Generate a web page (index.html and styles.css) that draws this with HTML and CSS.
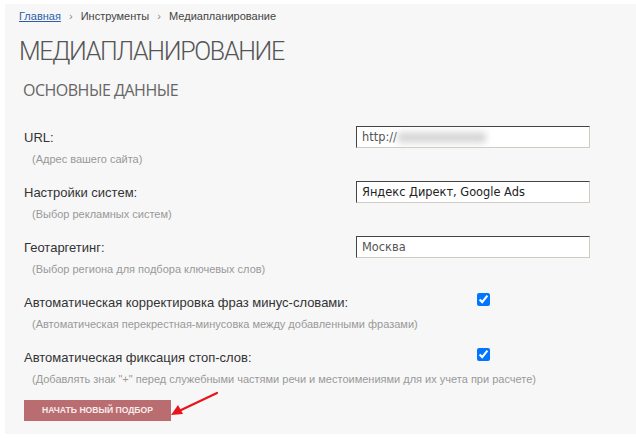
FILE: index.html
```html
<!DOCTYPE html>
<html lang="ru">
<head>
  <meta charset="utf-8">
  <title>Медиапланирование</title>
  <link rel="stylesheet" href="styles.css">
</head>
<body>
  <div class="page">
    <div class="crumbs">
      <a href="#">Главная</a>
      <span class="sep">›</span>
      <span>Инструменты</span>
      <span class="sep">›</span>
      <span>Медиапланирование</span>
    </div>
    <h1>Медиапланирование</h1>
    <h2>Основные данные</h2>

    <form class="form">
      <div class="row">
        <label class="label">URL:</label>
        <div class="hint">(Адрес вашего сайта)</div>
        <div class="control url-field">
          <input class="field" type="text" value="http://">
          <span class="blur"></span>
        </div>
      </div>
      <div class="row">
        <label class="label">Настройки систем:</label>
        <div class="hint">(Выбор рекламных систем)</div>
        <div class="control">
          <input class="field dark" type="text" value="Яндекс Директ, Google Ads">
        </div>
      </div>
      <div class="row">
        <label class="label">Геотаргетинг:</label>
        <div class="hint">(Выбор региона для подбора ключевых слов)</div>
        <div class="control">
          <input class="field" type="text" value="Москва">
        </div>
      </div>
      <div class="row">
        <label class="label">Автоматическая корректировка фраз минус-словами:</label>
        <div class="hint">(Автоматическая перекрестная-минусовка между добавленными фразами)</div>
        <div class="control check">
          <input type="checkbox" checked>
        </div>
      </div>
      <div class="row">
        <label class="label">Автоматическая фиксация стоп-слов:</label>
        <div class="hint">(Добавлять знак "+" перед служебными частями речи и местоимениями для их учета при расчете)</div>
        <div class="control check">
          <input type="checkbox" checked>
        </div>
      </div>
      <div class="actions">
        <button class="btn" type="button">Начать новый подбор</button>
        <svg class="arrow" width="50" height="26" viewBox="0 0 50 26">
          <line x1="48" y1="2" x2="10" y2="20" stroke="#e8141b" stroke-width="2.2" stroke-linecap="round"/>
          <polygon points="2,24 9,14 14,23" fill="#e8141b"/>
        </svg>
      </div>
    </form>
  </div>
</body>
</html>
```

FILE: styles.css
```css
body {
  margin: 0;
  background-color: #fff;
  font-family: "Liberation Sans", Arial, sans-serif;
  color: #333;
}
.page {
  margin: 4px 0 4px 5px;
  height: 430px;
  padding: 5px 0 0 14px;
  box-sizing: border-box;
  background-color: #f7f7f7;
}
.crumbs {
  font-size: 11px;
  line-height: 14px;
  color: #444;
}
.crumbs a {
  color: #2b5fad;
}
.crumbs .sep {
  color: #888;
  margin: 0 5px;
}
h1 {
  margin: 13px 0 0;
  font-family: Roboto, sans-serif;
  font-weight: 300;
  font-size: 25px;
  line-height: 32px;
  color: #555;
  text-transform: uppercase;
  letter-spacing: -1.3px;
}
h2 {
  margin: 12px 0 0 4px;
  font-family: "Open Sans", sans-serif;
  font-weight: 400;
  font-size: 16px;
  line-height: 20px;
  color: #666;
  text-transform: uppercase;
  letter-spacing: -0.5px;
}
.form {
  margin: 27px 0 0 5px;
}
.row {
  display: grid;
  grid-template-columns: 332px 234px;
  grid-template-rows: 22px 22px;
  margin-bottom: 11px;
}
.label {
  grid-column: 1;
  grid-row: 1;
  font-size: 13px;
  line-height: 22px;
  color: #333;
  white-space: nowrap;
}
.hint {
  grid-column: 1 / 3;
  grid-row: 2;
  padding-left: 8px;
  font-size: 11px;
  line-height: 20px;
  color: #999;
  white-space: nowrap;
}
.control {
  grid-column: 2;
  grid-row: 1;
}
.url-field {
  position: relative;
}
.field {
  width: 234px;
  height: 22px;
  box-sizing: border-box;
  margin: -1px 0 0;
  padding: 0 5px;
  border: 1px solid;
  border-color: #444 #d2cbc4 #d2cbc4 #444;
  background-color: #fff;
  font-family: "DejaVu Sans", sans-serif;
  font-size: 11.4px;
  color: #555;
}
.field.dark {
  color: #222;
}
.blur {
  position: absolute;
  left: 42px;
  top: 5px;
  width: 88px;
  height: 11px;
  background-color: #d8d8d8;
  filter: blur(3px);
}
.check input {
  width: 13px;
  height: 13px;
  margin: -6px 0 0 121px;
  accent-color: #0075ff;
}
.actions {
  position: relative;
  margin-top: -3px;
}
.btn {
  width: 147px;
  height: 21px;
  border: none;
  background-color: #ba6d71;
  color: #f6ecec;
  font-family: "Liberation Sans", Arial, sans-serif;
  font-weight: bold;
  font-size: 8.6px;
  text-transform: uppercase;
  cursor: pointer;
}
.arrow {
  position: absolute;
  left: 145px;
  top: -8px;
}
```
